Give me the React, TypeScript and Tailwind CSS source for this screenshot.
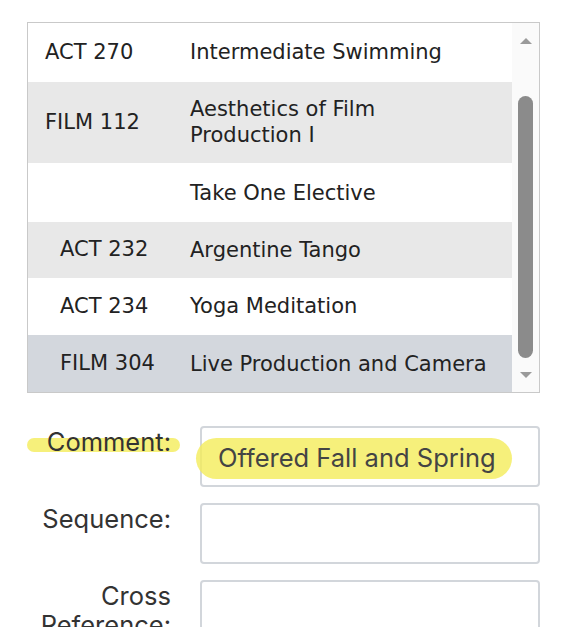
import React from 'react';

type Row = { code: string; name: React.ReactNode; h: string; bg: string; indent?: boolean };

const rows: Row[] = [
  { code: 'ACT 270', name: 'Intermediate Swimming', h: 'h-[59px]', bg: 'bg-white' },
  { code: 'FILM 112', name: <>Aesthetics of Film<br />Production I</>, h: 'h-[82px]', bg: 'bg-[#e8e8e8]' },
  { code: '', name: 'Take One Elective', h: 'h-[59px]', bg: 'bg-white' },
  { code: 'ACT 232', name: 'Argentine Tango', h: 'h-[56px]', bg: 'bg-[#e8e8e8]', indent: true },
  { code: 'ACT 234', name: 'Yoga Meditation', h: 'h-[58px]', bg: 'bg-white', indent: true },
  { code: 'FILM 304', name: 'Live Production and Camera', h: 'h-[57px]', bg: 'bg-[#d3d7dd]', indent: true },
];

function CourseList() {
  return (
    <div className="flex w-[513px] h-[371px] border border-[#c9c9c9] bg-white overflow-hidden">
      <div className="flex-1 flex flex-col">
        {rows.map((r, i) => (
          <div key={i} className={`flex items-center ${r.h} ${r.bg}`}>
            <div className={`w-[162px] shrink-0 ${r.indent ? 'pl-[32px]' : 'pl-[17px]'}`}>{r.code}</div>
            <div className="leading-[26px]">{r.name}</div>
          </div>
        ))}
      </div>
      {/* scrollbar */}
      <div className="w-[27px] shrink-0 bg-[#fafafa] flex flex-col items-center">
        <div className="mt-[15px] w-0 h-0 border-l-[6px] border-r-[6px] border-b-[6px] border-l-transparent border-r-transparent border-b-[#9a9a9a]" />
        <div className="mt-[52px] w-[15px] h-[262px] rounded-full bg-[#8b8b8b]" />
        <div className="mt-[14px] w-0 h-0 border-l-[6px] border-r-[6px] border-t-[6px] border-l-transparent border-r-transparent border-t-[#9a9a9a]" />
      </div>
    </div>
  );
}

function Field({ label, children }: { label: React.ReactNode; children?: React.ReactNode }) {
  return (
    <div className="flex items-start">
      <div className="w-[144px] shrink-0 text-right pt-[1px] leading-[29px] text-[#333]">{label}</div>
      <div className="ml-[29px] w-[340px] h-[61px] shrink-0 border-2 border-[#d2d6db] rounded-[4px] bg-white relative flex items-center px-[16px] text-[#444]">
        {children}
      </div>
    </div>
  );
}

export default function App() {
  return (
    <div className="w-[567px] h-[627px] bg-white overflow-hidden pt-[22px] pl-[27px]">
      <div className="text-[21px] text-[#222]" style={{ fontFamily: '"DejaVu Sans", Verdana, sans-serif' }}>
        <CourseList />
      </div>
      <div className="mt-[33px] flex flex-col gap-[16px] text-[25.5px]" style={{ fontFamily: 'Inter, "Liberation Sans", sans-serif' }}>
        <Field
          label={
            <span className="relative inline-block">
              <span className="absolute left-[-20px] right-[-9px] top-[11px] h-[14px] rounded-full bg-[#f4ec5a]/80" />
              <span className="relative">Comment:</span>
            </span>
          }
        >
          <span className="absolute left-[-6px] top-[10px] w-[316px] h-[41px] rounded-full bg-[#f4ec5a]/80" />
          <span className="relative mt-[3px]">Offered Fall and Spring</span>
        </Field>
        <Field label="Sequence:" />
        <Field label={<>Cross<br />Reference:</>} />
      </div>
    </div>
  );
}
